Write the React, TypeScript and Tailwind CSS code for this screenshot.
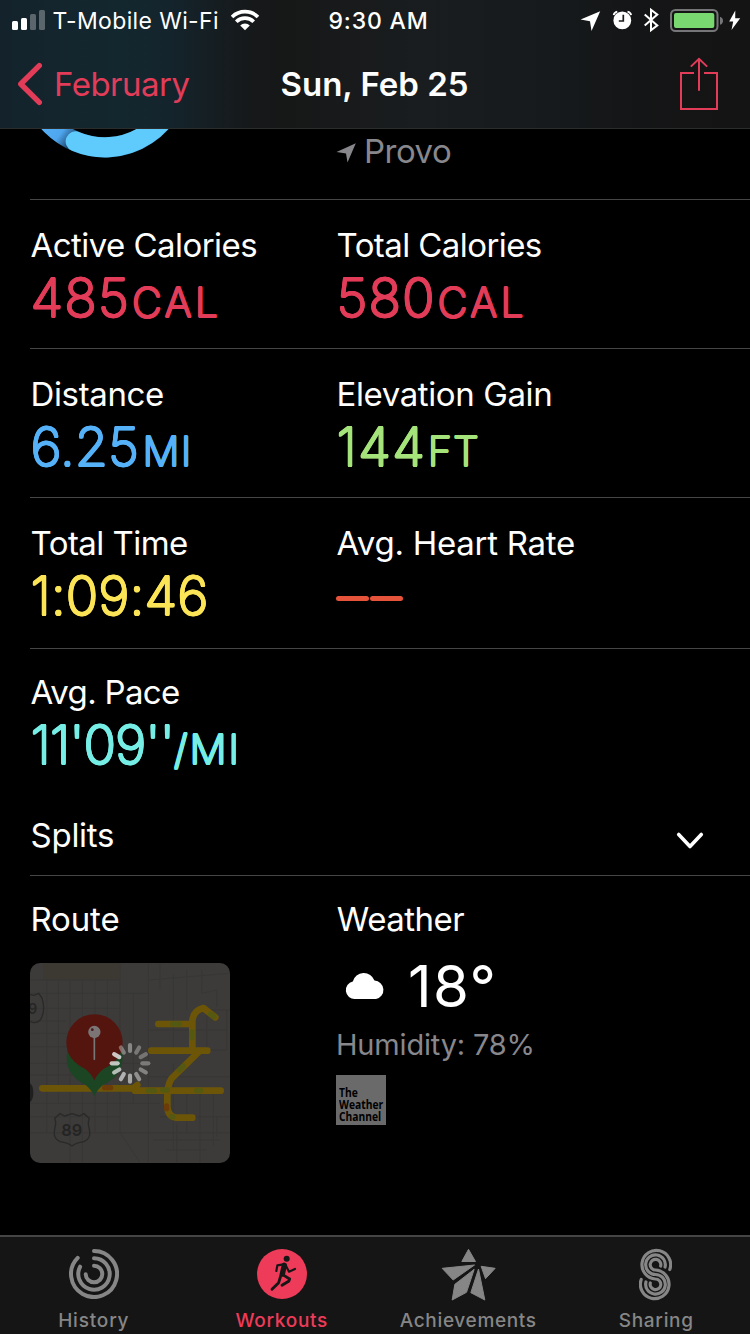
import type { ReactNode } from "react";

const ROUNDED =
  "font-extralight [text-shadow:1.1px_0_0_currentColor,-1.1px_0_0_currentColor,0_1.1px_0_currentColor,0_-1.1px_0_currentColor,0.78px_0.78px_0_currentColor,-0.78px_0.78px_0_currentColor,0.78px_-0.78px_0_currentColor,-0.78px_-0.78px_0_currentColor]";

function Label({ children, track }: { children: ReactNode; track: string }) {
  return <div className={`h-10 text-[33px] leading-[40px] whitespace-nowrap text-white ${track}`}>{children}</div>;
}

function Metric({
  label,
  labelTrack,
  value,
  valueTrack,
  unit,
  unitClass = "",
  color,
}: {
  label: string;
  labelTrack: string;
  value: ReactNode;
  valueTrack: string;
  unit?: ReactNode;
  unitClass?: string;
  color: string;
}) {
  return (
    <div className="w-[306px]">
      <Label track={labelTrack}>{label}</Label>
      <div className={`h-[66px] text-[53.5px] leading-[65px] whitespace-nowrap ${color} ${ROUNDED}`}>
        <span className={valueTrack}>{value}</span>
        {unit && <span className={`text-[41px] ${unitClass}`}>{unit}</span>}
      </div>
    </div>
  );
}

function StatusBar() {
  return (
    <div className="flex h-10 text-[23px] leading-[42px] text-white">
      <div className="flex w-[328px] pl-3">
        <svg width="33" height="40" viewBox="12 0 33 40" fill="#fff">
          <rect x="12" y="21" width="6" height="9" rx="1.5" />
          <rect x="21" y="18" width="6" height="12" rx="1.5" />
          <rect x="30" y="14" width="6" height="16" rx="1.5" opacity=".3" />
          <rect x="39" y="10" width="6" height="20" rx="1.5" opacity=".3" />
        </svg>
        <span className="ml-[7.5px] w-[178.5px] tracking-[0.36px]">T-Mobile Wi-Fi</span>
        <svg width="28" height="40" viewBox="231 0 28 40" fill="none" stroke="#fff" strokeWidth="3.7">
          <path d="M232 17a18.600 18.600 0 0 1 26 0" />
          <path d="M236.300 21.800a12.300 12.300 0 0 1 17.400 0" />
          <path d="M245 30.200l-4.800-4.600a6.600 6.600 0 0 1 9.600 0z" fill="#fff" stroke="none" />
        </svg>
      </div>
      <span className="w-[252px] pl-[0.5px] font-medium tracking-[0.85px]">9:30 AM</span>
      <svg width="170" height="40" viewBox="580 0 170 40" fill="none">
        <path d="M580.6 19.4L600.2 11.2L591.5 31L590 21.2Z" fill="#fff" />
        <circle cx="622.3" cy="20.4" r="8.9" fill="#fff" />
        <path d="M623.3 14.8V21H618.8" stroke="#1a1b1c" strokeWidth="1.7" />
        <path d="M613.7 15.1q.5-2.8 3.6-3.4M631.1 15.1q-.5-2.8-3.6-3.4" stroke="#fff" strokeWidth="1.8" />
        <path d="M644.7 14.6L657.3 25.4L651 30.2V9.8L657.3 14.6L644.7 25.4" stroke="#fff" strokeWidth="2" />
        <rect x="671" y="10" width="46.5" height="21" rx="4.5" stroke="#767678" strokeWidth="2" />
        <rect x="674" y="13" width="40.3" height="15" rx="2" fill="#79d970" />
        <path d="M720 16.7q3 1 3 4t-3 4z" fill="#767678" />
        <path d="M735.3 10.5L729.2 21.6H733.2L731.5 30L740.2 18.2H735.2Z" fill="#fff" />
      </svg>
    </div>
  );
}

function Header() {
  return (
    <header className="h-[129px] border-b border-[#2b2c2c] bg-[linear-gradient(90deg,#14232b_0,#13272f_120px,#14242c_170px,#151f24_205px,#16191b_245px,#161717_285px,#18191a_330px,#191d1f_420px,#161a1c_550px,#141516_640px,#141414_750px)]">
      <StatusBar />
      <div className="flex h-[88px] items-start text-[33px] leading-[88px]">
        <div className="flex w-[280.5px] pl-[18px] text-[#e23c59]">
          <svg width="24" height="88" viewBox="18 40 24 88" fill="none" stroke="currentColor" strokeWidth="5.4" strokeLinecap="round" strokeLinejoin="round">
            <path d="M39.300 65.600L20.800 84L39.300 102.400" />
          </svg>
          <span className="ml-3 tracking-[-0.5px]">February</span>
        </div>
        <span className="w-[399.5px] font-semibold text-white">Sun, Feb 25</span>
        <svg width="38" height="88" viewBox="680 40 38 88" fill="none" stroke="#e23c59" strokeWidth="2">
          <path d="M694 73H681V109H717V73H704M699 90.800V59M690.800 66.600L699 58.800L707.200 66.600" />
        </svg>
      </div>
    </header>
  );
}

const GRID_LINES =
  "M30 90H300V40M30 130H385M30 175H300M30 213H140M30 250H140M30 290H140M30 340H385M30 375H300M30 460H420M30 500H300M30 548H300L360 638M300 548H630M80 90V548M115 90V460M150 90V638M187 90V638M225 90V548M262 90V548M300 90V548M340 130V460M385 40V638M385 90L630 70M420 40V120M460 70V300M500 60V180M545 60V130L590 120V170M560 180H630M560 180V300H620V180M385 240H620M385 380H630M460 340V600M500 420V548M540 420V638M580 430V590M420 500H630M400 570H600M440 600H560M470 520V638M590 500V560";

const SPOKES = [0.45, 0.36, 0.34, 0.38, 0.42, 0.5, 0.64, 0.7, 0.76, 0.82, 0.85, 0.4];

function RouteMap() {
  return (
    <svg className="rounded-[10px]" width="200" height="200" viewBox="30 39 600 600" fill="none">
      <rect x="30" y="39" width="600" height="600" fill="#3c3b39" />
      <rect x="70" y="39" width="230" height="50" fill="#3c3933" />
      <path d={GRID_LINES} stroke="#383736" strokeWidth="3" />
      <path d="M30 134l12 2 14-6 10 14q10 32 0 56-6 16-22 18-8 0-14-4" stroke="#292929" strokeWidth="4" />
      <text x="25" y="193" fontFamily="Inter" fontSize="42" fontWeight="600" fill="#262626">9</text>
      <path d="M104 505l16-14 14 7 22-7 22 7 14-7 16 14q-6 14 0 32 6 30-16 38-24 3-36 13-12-10-36-13-22-8-16-38 6-18 0-32z" stroke="#292929" strokeWidth="4" />
      <text x="155" y="558" fontFamily="Inter" fontSize="49" fontWeight="600" textAnchor="middle" fill="#242424">89</text>
      <path d="M30 400q10 8 10 28t-10 28z" fill="#1f1f1f" />
      <g stroke="#6d5507" strokeWidth="20" strokeLinecap="round" strokeLinejoin="round">
        <path d="M67 415H340L352 405M345 422H602" />
        <path d="M415 222H512M394 302H562M517 302V215Q518 182 550 174L586 202M540 302L455 385Q442 405 442 440V470Q444 500 470 503H517" />
      </g>
      <g stroke="#4e5a14" strokeWidth="16" strokeLinecap="round" opacity=".75">
        <path d="M458 222h20M516 245v18M572 192l10 8M490 348l-12 12M385 422h18M428 420h14M530 422h12M455 500h4" />
      </g>
      <path d="M254 413h18M440 468v8" stroke="#6c3208" strokeWidth="16" strokeLinecap="round" opacity=".7" />
      <path d="M223 438Q214 418 196 404Q140 378 140 322A84 84 0 0 1 308 322Q308 378 250 404Q232 418 223 438Z" fill="#1c4523" />
      <path d="M223 391Q214 371 196 357Q139 330 139 277A84.500 84.500 0 0 1 308 277Q308 330 250 357Q232 371 223 391Z" fill="#55150f" />
      <path d="M223 262V328" stroke="#777" strokeWidth="5" strokeLinecap="round" />
      <circle cx="223" cy="246" r="18.500" fill="#7b7675" />
      <circle cx="217" cy="239" r="4" fill="#45191a" />
      <g stroke="#e4e4e4" strokeWidth="12.500" strokeLinecap="round">
        {SPOKES.map((o, i) => (
          <path key={i} d="M330 303V285" opacity={o} transform={`rotate(${i * 30} 330 340)`} />
        ))}
      </g>
    </svg>
  );
}

function HistoryIcon() {
  return (
    <svg width="50" height="50" viewBox="69 1249 50 50" fill="none" stroke="#868686" strokeWidth="4" strokeLinecap="round">
      <path d="M94 1251A23 23 0 1 1 77.700 1257.800" />
      <path d="M94 1258.300A15.700 15.700 0 1 1 80.100 1266.700" />
      <path d="M94 1265.700A8.300 8.300 0 1 1 85.700 1274.300" />
    </svg>
  );
}

function WorkoutsIcon() {
  return (
    <svg className="ml-[1.5px]" width="50" height="50" viewBox="771 72 150 150" fill="none" stroke="#161616" strokeLinecap="round" strokeLinejoin="round">
      <circle cx="846" cy="147" r="75" fill="#ee3b59" stroke="none" />
      <circle cx="860" cy="101.500" r="9" fill="#161616" stroke="none" />
      <path d="M829 138L832 121L850 118" strokeWidth="6.500" />
      <path d="M853 121L847 147" strokeWidth="16" />
      <path d="M857 121L867 140L885 132" strokeWidth="6.500" />
      <path d="M848 149L869 162L866 169L846 181" strokeWidth="8.500" />
      <path d="M843 150L836 173L816 193" strokeWidth="8.500" />
    </svg>
  );
}

function AchievementsIcon() {
  return (
    <svg className="mt-px mr-px" width="55" height="53" viewBox="196.500 70 165 159" fill="#868686" stroke="#868686" strokeWidth="3" strokeLinejoin="round">
      <path d="M279 74L259 110.500H300Z" />
      <path d="M200 131L297 121L233 166Z" />
      <path d="M317 125L359 131L330 162Z" />
      <path d="M296 134L273 203L230 226L238 179Z" />
      <path d="M309 133L328 226L286 204Z" />
    </svg>
  );
}

function SharingIcon() {
  return (
    <svg className="mt-px mr-[1.5px]" width="33" height="53" viewBox="793 67 99 159" fill="none" stroke="#868686" strokeWidth="9.500" strokeLinecap="round">
      <path d="M885.300 131.700A43 43 0 1 0 842.500 160A16 16 0 1 1 827 171.900" />
      <path d="M871.100 124.100A29.500 29.500 0 1 0 842.500 146.500A29.500 29.500 0 1 1 813.900 168.900" />
      <path d="M858 121.100A16 16 0 1 0 842.500 133A43 43 0 1 1 799.700 161.300" />
    </svg>
  );
}

function Tab({ icon, label, className }: { icon: ReactNode; label: string; className: string }) {
  return (
    <div className="flex flex-1 flex-col items-center">
      <div className="flex h-[73px] items-center">{icon}</div>
      <span className={`-mt-px text-[19px] leading-[24px] font-medium ${className}`}>{label}</span>
    </div>
  );
}

export default function App() {
  return (
    <div className="flex h-[1334px] w-[750px] flex-col overflow-hidden bg-black font-['Inter','Liberation_Sans',sans-serif]">
      <Header />
      <main className="flex flex-1 flex-col pl-[30px]">
        <section className="flex h-[71px] border-b border-[#464646]">
          <svg className="w-[306px]" width="306" height="70" viewBox="30 129 306 70" fill="none">
            <defs>
              <linearGradient id="tail" x1="40" y1="129" x2="68" y2="150" gradientUnits="userSpaceOnUse">
                <stop offset="0" stopColor="#55b1f8" />
                <stop offset=".55" stopColor="#4ea6ee" />
                <stop offset="1" stopColor="#173a5c" />
              </linearGradient>
            </defs>
            <circle cx="105" cy="72.200" r="75.200" stroke="url(#tail)" strokeWidth="20.300" />
            <path d="M75.800 141.500A75.200 75.200 0 0 0 180 72" stroke="#5ecbfc" strokeWidth="20.300" strokeLinecap="round" />
          </svg>
          <div className="flex text-[33px] leading-[44px] text-[#87878c]">
            <svg width="20" height="44" viewBox="336 129 20 44">
              <path d="M336.500 152L355.800 143.300L347.500 162.500L346 153.500Z" fill="#87878c" />
            </svg>
            <span className="ml-2 tracking-[-0.5px]">Provo</span>
          </div>
        </section>

        <section className="flex h-[149px] border-b border-[#464646] pt-[25px] pl-[0.5px]">
          <Metric label="Active Calories" labelTrack="tracking-[-0.55px]" value="485" valueTrack="tracking-[1.2px]" unit="CAL" unitClass="ml-[2px] tracking-[3.4px]" color="text-[#e23c59]" />
          <Metric label="Total Calories" labelTrack="tracking-[-0.58px]" value="580" valueTrack="tracking-[1.2px]" unit="CAL" unitClass="ml-[2px] tracking-[3.4px]" color="text-[#e23c59]" />
        </section>

        <section className="flex h-[149px] border-b border-[#464646] pt-[25px] pl-[0.5px]">
          <Metric label="Distance" labelTrack="tracking-[-0.35px]" value="6.25" valueTrack="tracking-[0.1px]" unit="MI" unitClass="ml-[3.6px] tracking-[1.4px]" color="text-[#56b2f8]" />
          <Metric label="Elevation Gain" labelTrack="tracking-[-0.4px]" value="144" valueTrack="tracking-[1.3px]" unit="FT" unitClass="ml-[1.6px] tracking-[1.2px]" color="text-[#a5e37b]" />
        </section>

        <section className="flex h-[151px] border-b border-[#464646] pt-[25px] pl-[0.5px]">
          <Metric label="Total Time" labelTrack="tracking-[-0.55px]" value="1:09:46" valueTrack="tracking-[0.1px]" color="text-[#fbe456]" />
          <div>
            <Label track="tracking-[-0.26px]">Avg. Heart Rate</Label>
            <div className="mt-[33px] -ml-[0.5px] flex gap-px">
              <div className="h-[5px] w-[33px] rounded-full bg-[#e5533a]" />
              <div className="h-[5px] w-[33px] rounded-full bg-[#e5533a]" />
            </div>
          </div>
        </section>

        <section className="flex h-[145px] pt-[23px] pl-[0.5px]">
          <Metric label="Avg. Pace" labelTrack="tracking-[-0.68px]" value="11'09''" valueTrack="tracking-[-0.9px]" unit="/MI" unitClass="tracking-[2px]" color="text-[#76eee6]" />
        </section>

        <section className="flex h-[82px] justify-between border-b border-[#464646] pt-[21px] pr-[46px] pl-[0.5px]">
          <Label track="tracking-[-0.25px]">Splits</Label>
          <svg width="28" height="40" viewBox="676 815 28 40" fill="none" stroke="#fff" strokeWidth="3.600" strokeLinecap="round" strokeLinejoin="round">
            <path d="M678.700 834.500L690 846.500L701.300 834.500" />
          </svg>
        </section>

        <section className="flex pt-[23px]">
          <div className="w-[306px]">
            <div className="pl-[0.5px]">
              <Label track="tracking-[-0.15px]">Route</Label>
            </div>
            <div className="mt-6">
              <RouteMap />
            </div>
          </div>
          <div>
            <div className="pl-[0.8px]">
              <Label track="tracking-[-0.5px]">Weather</Label>
            </div>
            <div className="mt-[17px] flex h-[60px] text-[58px] leading-[60px] text-white">
              <svg width="60" height="60" viewBox="336 956 60 60" fill="#fff">
                <path d="M355 999A8.800 8.800 0 0 1 352.800 981.600A11.300 11.300 0 0 1 374.500 980.600A9.300 9.300 0 0 1 376 999Z" />
              </svg>
              <span className="ml-3 tracking-[1.5px]">18°</span>
            </div>
            <div className="mt-[11px] h-9 text-[29px] leading-[36px] tracking-[-0.18px] text-[#87878c]">Humidity: 78%</div>
            <div className="mt-3 h-[50px] w-[50px] bg-[#6a6a6a] pt-[11px] pl-[3px]">
              <div className="flex w-[60px] origin-left scale-x-[.88] flex-col font-['Open_Sans',sans-serif] text-[11.7px] leading-[12px] font-bold text-black">
                <span>The</span>
                <span>Weather</span>
                <span>Channel</span>
              </div>
            </div>
          </div>
        </section>
      </main>
      <nav className="flex h-[99px] border-t-2 border-[#454545] bg-[#151515]">
        <Tab icon={<HistoryIcon />} label="History" className="tracking-[0.82px] text-[#868686]" />
        <Tab icon={<WorkoutsIcon />} label="Workouts" className="pl-px tracking-[0.7px] text-[#ee3b59]" />
        <Tab icon={<AchievementsIcon />} label="Achievements" className="pr-px tracking-[0.66px] text-[#868686]" />
        <Tab icon={<SharingIcon />} label="Sharing" className="tracking-[0.7px] text-[#868686]" />
      </nav>
    </div>
  );
}
